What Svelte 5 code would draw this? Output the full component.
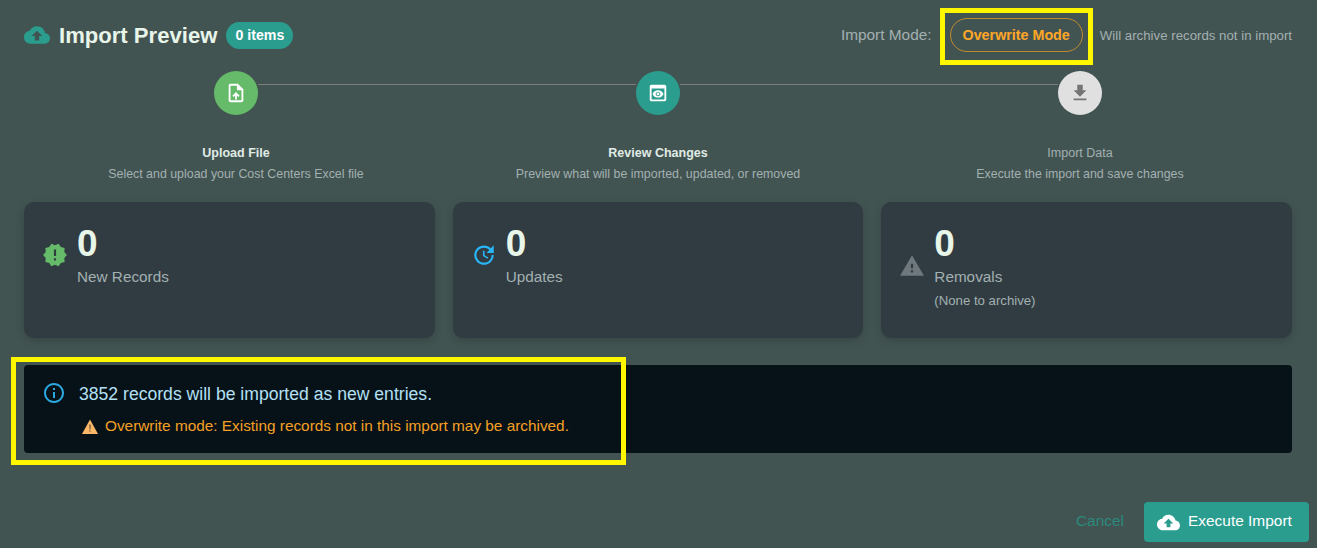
<script>
  const cloud = 'M19.35 10.04C18.67 6.59 15.64 4 12 4 9.11 4 6.6 5.64 5.35 8.04 2.34 8.36 0 10.91 0 14c0 3.31 2.69 6 6 6h13c2.76 0 5-2.24 5-5 0-2.64-2.05-4.78-4.65-4.96zM14 13v4h-4v-4H7l5-5 5 5h-3z'

  const steps = [
    {
      title: 'Upload File',
      text: 'Select and upload your Cost Centers Excel file',
      kind: 'green',
      icon: 'M14 2H6c-1.1 0-1.99.9-1.99 2L4 20c0 1.1.89 2 1.99 2H18c1.1 0 2-.9 2-2V8l-6-6zm4 18H6V4h7v5h5v11zM8 15.01l1.41 1.41L11 14.84V19h2v-4.16l1.59 1.59L16 15.01 12.01 11 8 15.01z'
    },
    {
      title: 'Review Changes',
      text: 'Preview what will be imported, updated, or removed',
      kind: 'teal',
      icon: 'M19 3H5c-1.11 0-2 .9-2 2v14c0 1.1.89 2 2 2h14c1.1 0 2-.9 2-2V5c0-1.1-.89-2-2-2zm0 16H5V7h14v12zm-5.5-6c0 .83-.67 1.5-1.5 1.5s-1.5-.67-1.5-1.5.67-1.5 1.5-1.5 1.5.67 1.5 1.5zM12 9c-2.73 0-5.06 1.66-6 4 .94 2.34 3.27 4 6 4s5.06-1.66 6-4c-.94-2.34-3.27-4-6-4zm0 6.5c-1.38 0-2.5-1.12-2.5-2.5s1.12-2.5 2.5-2.5 2.5 1.12 2.5 2.5-1.12 2.5-2.5 2.5z'
    },
    {
      title: 'Import Data',
      text: 'Execute the import and save changes',
      kind: 'idle',
      icon: 'M19 9h-4V3H9v6H5l7 7 7-7zM5 18v2h14v-2H5z'
    }
  ]

  const stats = [
    {
      value: 0,
      label: 'New Records',
      kind: 'green',
      icon: 'M23 12l-2.44-2.78.34-3.68-3.61-.82-1.89-3.18L12 3 8.6 1.54 6.71 4.72l-3.61.81.34 3.68L1 12l2.44 2.78-.34 3.69 3.61.82 1.89 3.18L12 21l3.4 1.46 1.89-3.18 3.61-.82-.34-3.68L23 12zm-10 5h-2v-2h2v2zm0-4h-2V7h2v6z'
    },
    {
      value: 0,
      label: 'Updates',
      kind: 'blue',
      icon: 'M21 10.12h-6.78l2.74-2.82c-2.73-2.7-7.15-2.8-9.88-.1-2.73 2.71-2.73 7.08 0 9.79s7.15 2.71 9.88 0C18.32 15.65 19 14.08 19 12.1h2c0 1.98-.88 4.55-2.64 6.29-3.51 3.48-9.21 3.48-12.72 0-3.5-3.47-3.53-9.11-.02-12.58s9.14-3.47 12.65 0L21 3v7.12zM12.5 8v4.25l3.5 2.08-.72 1.21L11 13V8h1.5z'
    },
    {
      value: 0,
      label: 'Removals',
      note: '(None to archive)',
      kind: 'grey',
      icon: 'M1 21h22L12 2 1 21zm12-3h-2v-2h2v2zm0-4h-2v-4h2v4z'
    }
  ]
</script>

<main>
  <header>
    <div class="title">
      <svg class="cloud" viewBox="0 0 24 24"><path d={cloud} /></svg>
      <h2>Import Preview</h2>
      <span class="chip">0 items</span>
    </div>
    <div class="mode">
      <span class="mode-label">Import Mode:</span>
      <div class="mark-wrap">
        <span class="mode-chip">Overwrite Mode</span>
        <span class="mark mark-mode"></span>
      </div>
      <span class="mode-note">Will archive records not in import</span>
    </div>
  </header>

  <section class="stepper">
    {#each steps as step, i}
      <div class="step">
        {#if i > 0}<span class="line"></span>{/if}
        <span class="dot {step.kind}">
          <svg viewBox="0 0 24 24"><path d={step.icon} /></svg>
        </span>
        <span class="step-title" class:dim={step.kind === 'idle'}>{step.title}</span>
        <span class="step-text">{step.text}</span>
      </div>
    {/each}
  </section>

  <section class="cards">
    {#each stats as stat}
      <div class="card">
        <div class="stat-row">
          <svg class="stat-icon {stat.kind}" viewBox="0 0 24 24"><path d={stat.icon} /></svg>
          <div>
            <div class="value">{stat.value}</div>
            <div class="label">{stat.label}</div>
            {#if stat.note}<div class="note">{stat.note}</div>{/if}
          </div>
        </div>
      </div>
    {/each}
  </section>

  <section class="alert">
    <svg class="info" viewBox="0 0 24 24"><path d="M11 7h2v2h-2zm0 4h2v6h-2zm1-9C6.48 2 2 6.48 2 12s4.48 10 10 10 10-4.48 10-10S17.52 2 12 2zm0 18c-4.41 0-8-3.59-8-8s3.59-8 8-8 8 3.59 8 8-3.59 8-8 8z" /></svg>
    <div>
      <div class="alert-main">3852 records will be imported as new entries.</div>
      <div class="alert-warn">
        <svg viewBox="0 0 16 16">
          <path class="tri" d="M8 .6 16 15H0z" />
          <path class="bang" d="M7.4 5.6h1.2l-.2 5h-.8zM7.4 11.4h1.2v1.2H7.4z" />
        </svg>
        <span>Overwrite mode: Existing records not in this import may be archived.</span>
      </div>
    </div>
    <span class="mark mark-alert"></span>
  </section>

  <footer>
    <button class="cancel">Cancel</button>
    <button class="execute">
      <svg viewBox="0 0 24 24"><path d={cloud} /></svg>
      Execute Import
    </button>
  </footer>
</main>

<style>
  :global(body) {
    margin: 0;
    background: #425452;
  }

  main {
    display: flex;
    flex-direction: column;
    height: 548px;
    box-sizing: border-box;
    padding: 0 25px 0 24px;
    overflow: hidden;
    font-family: "Liberation Sans", sans-serif;
    color: #e8f5e9;
    background: #425452;
  }

  header {
    display: flex;
    justify-content: space-between;
    align-items: center;
    height: 70px;
  }

  .title {
    display: flex;
    align-items: center;
  }

  .cloud {
    width: 26px;
    height: 26px;
    margin-right: 9px;
    fill: #2a9d8f;
  }

  h2 {
    margin: 2px 9px 0 0;
    font-size: 22.1px;
    font-weight: 700;
    line-height: 1.2;
  }

  .chip {
    display: inline-flex;
    align-items: center;
    height: 27px;
    padding: 0 9px;
    border-radius: 14px;
    font-size: 14.2px;
    font-weight: 700;
    color: #fff;
    background: #2a9d8f;
  }

  .mode {
    display: flex;
    align-items: center;
  }

  .mode-label {
    margin-right: 18px;
    font-size: 15.4px;
    color: #a3b0b1;
  }

  .mark-wrap {
    position: relative;
    display: flex;
  }

  .mode-chip {
    display: inline-flex;
    align-items: center;
    box-sizing: border-box;
    height: 34px;
    padding: 0 12px;
    border: 1px solid #c28a2e;
    border-radius: 17px;
    font-size: 14.3px;
    font-weight: 700;
    color: #ffa726;
  }

  .mode-note {
    margin-left: 17px;
    font-size: 13.25px;
    color: #a3b0b1;
  }

  .mark {
    position: absolute;
    box-sizing: border-box;
    border: 5px solid #fff700;
    pointer-events: none;
  }

  .mark-mode {
    left: -10px;
    right: -10px;
    top: -10px;
    bottom: -13px;
  }

  .mark-alert {
    left: -13px;
    top: -8px;
    width: 615px;
    height: 108px;
  }

  .stepper {
    display: grid;
    grid-template-columns: repeat(3, 1fr);
    height: 131px;
    margin-top: 1px;
    padding: 0 1px;
  }

  .step {
    position: relative;
    display: flex;
    flex-direction: column;
    align-items: center;
  }

  .line {
    position: absolute;
    top: 13px;
    left: calc(-50% + 22px);
    right: calc(50% + 22px);
    height: 1px;
    background: #7f7c7c;
  }

  .dot {
    display: flex;
    align-items: center;
    justify-content: center;
    width: 44px;
    height: 44px;
    border-radius: 50%;
  }

  .dot svg {
    width: 22px;
    height: 22px;
    fill: #fff;
  }

  .dot.green {
    background: #66bb6a;
  }

  .dot.teal {
    background: #2a9d8f;
  }

  .dot.idle {
    background: #e0e0e0;
  }

  .dot.idle svg {
    fill: #757575;
  }

  .step-title {
    margin-top: 29px;
    font-size: 12.5px;
    font-weight: 700;
    line-height: 18px;
    color: #e0ebe6;
  }

  .step-title.dim {
    font-weight: 400;
    color: #a3b0b1;
  }

  .step-text {
    margin-top: 3px;
    font-size: 12.4px;
    line-height: 18px;
    color: #a3b0b1;
  }

  .cards {
    display: grid;
    grid-template-columns: repeat(3, 1fr);
    gap: 18px;
  }

  .card {
    box-sizing: border-box;
    height: 136px;
    padding: 19px 0 0 18px;
    border-radius: 10px;
    background: #303c42;
    box-shadow: 0 3px 8px rgba(0, 0, 0, 0.18);
  }

  .stat-row {
    display: flex;
    align-items: center;
  }

  .stat-icon {
    flex: none;
    width: 26px;
    height: 26px;
    margin-right: 9px;
  }

  .stat-icon.blue {
    fill: #29b6f6;
  }

  .stat-icon.green {
    fill: #66bb6a;
  }

  .stat-icon.grey {
    fill: #6f787c;
  }

  .value {
    font-size: 37px;
    font-weight: 700;
    line-height: 45px;
  }

  .label {
    font-size: 15.3px;
    line-height: 22px;
    color: #a3b0b1;
  }

  .note {
    margin-top: 4px;
    font-size: 13.2px;
    line-height: 18px;
    color: #a3b0b1;
  }

  .alert {
    position: relative;
    display: flex;
    align-items: flex-start;
    box-sizing: border-box;
    height: 88px;
    margin-top: 27px;
    padding: 17px 20px;
    border-radius: 4px;
    background: #071218;
  }

  .info {
    width: 24px;
    height: 24px;
    margin: -1px 13px 0 -2px;
    fill: #29a9e0;
  }

  .alert-main {
    font-size: 17.6px;
    line-height: 24px;
    color: #b3e0f5;
  }

  .alert-warn {
    display: flex;
    align-items: center;
    gap: 7px;
    margin: 10px 0 0 3px;
    font-size: 15.35px;
    line-height: 20px;
    color: #f5a025;
  }

  .alert-warn svg {
    width: 16px;
    height: 16px;
    margin-top: 1px;
  }

  .tri {
    fill: #fbb768;
  }

  .bang {
    fill: #4a3a20;
  }

  footer {
    display: flex;
    justify-content: flex-end;
    align-items: center;
    gap: 20px;
    margin: 49px -17px 0 0;
  }

  button {
    border: none;
    font-family: inherit;
    font-size: 15.45px;
    background: none;
  }

  .cancel {
    padding: 0 0 2px;
    color: #2b8a7d;
  }

  .execute {
    display: flex;
    align-items: center;
    gap: 8px;
    box-sizing: border-box;
    width: 165px;
    height: 40px;
    padding: 0 13px 2px;
    border-radius: 4px;
    color: #fff;
    background: #2a9d8f;
  }

  .execute svg {
    width: 23px;
    height: 23px;
    margin-top: 2px;
    fill: #fff;
  }
</style>
